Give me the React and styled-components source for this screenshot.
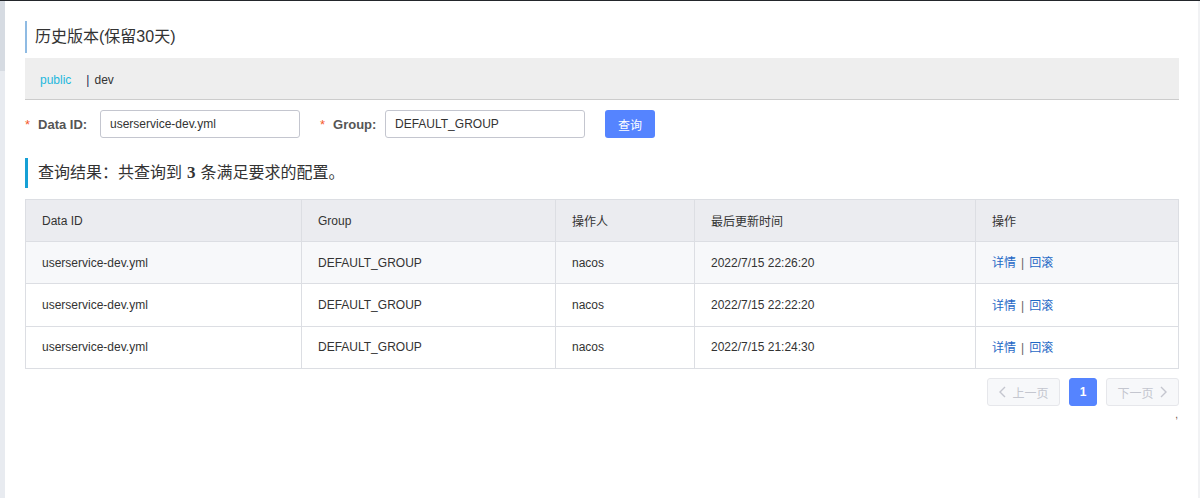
import React from "react";
import styled, { createGlobalStyle } from "styled-components";

const Global = createGlobalStyle`
  html, body { margin: 0; padding: 0; background: #fff; }
  body { font-family: "Liberation Sans", "Noto Sans CJK SC", sans-serif; color: #333; }
  * { box-sizing: border-box; }
`;

const Page = styled.div`
  width: 1200px;
  height: 498px;
  display: flex;
  flex-direction: column;
  border-top: 1px solid #23262b;
  overflow: hidden;
`;

const Body = styled.div`
  flex: 1;
  display: flex;
`;

const LeftRail = styled.div`
  width: 5px;
  display: flex;
  flex-direction: column;
  background: #e8ebf0;
`;

const RailThumb = styled.div`
  height: 70px;
  background: #d6dbe2;
`;

const RightRail = styled.div`
  width: 2px;
  background: #f1f2f4;
`;

const Main = styled.main`
  flex: 1;
  padding: 20px 19px 0 20px;
  display: flex;
  flex-direction: column;
`;

const PageTitle = styled.h1`
  margin: 0;
  height: 32px;
  line-height: 32px;
  border-left: 2px solid #8fbbe3;
  padding-left: 8px;
  font-size: 16px;
  font-weight: normal;
  color: #333;
`;

const NamespaceBar = styled.div`
  margin-top: 5px;
  height: 42px;
  background: #eee;
  border-bottom: 1px solid #ccc;
  display: flex;
  align-items: center;
  padding: 3px 0 0 15px;
  font-size: 12px;
`;

const Ns = styled.span`
  color: ${(p) => (p.$active ? "#1fb8dd" : "#333")};
  margin-right: ${(p) => (p.$active ? "15px" : "0")};
`;

const Sep = styled.span`
  color: #1a2750;
  margin-right: 5px;
`;

const FormRow = styled.div`
  margin-top: 10px;
  display: flex;
  align-items: center;
  height: 28px;
`;

const Label = styled.label`
  display: flex;
  align-items: center;
  font-size: 13px;
  font-weight: bold;
  color: #555;
  width: ${(p) => p.$w}px;
`;

const Star = styled.span`
  color: #f55a2c;
  margin-right: 8px;
  font-weight: normal;
`;

const Input = styled.input`
  width: 200px;
  height: 28px;
  border: 1px solid #c4c6cf;
  border-radius: 3px;
  padding: 0 9px;
  font-family: inherit;
  font-size: 12px;
  color: #333;
  margin-right: 20px;
  outline: none;
`;

const PrimaryButton = styled.button`
  width: 50px;
  height: 28px;
  border: none;
  border-radius: 3px;
  background: #5584ff;
  color: #fff;
  font-family: inherit;
  font-size: 12px;
  padding: 0;
`;

const ResultTitle = styled.h2`
  margin: 20px 0 0 0;
  height: 30px;
  line-height: 30px;
  border-left: 3px solid #16a0d5;
  padding-left: 10px;
  font-size: 16px;
  font-weight: normal;
  color: #333;
`;

const Count = styled.strong`
  font-family: "Liberation Serif", serif;
  font-size: 17px;
  margin: 0 5px;
`;

const Table = styled.table`
  margin-top: 11px;
  width: 100%;
  border-collapse: collapse;
  table-layout: fixed;
  font-size: 12px;
  border: 1px solid #dcdee3;
`;

const Th = styled.th`
  height: 42px;
  background: #ebecf0;
  font-weight: normal;
  text-align: left;
  padding: 0 16px;
  color: #333;
  border: 1px solid #dcdee3;
  width: ${(p) => p.$w}px;
`;

const Tr = styled.tr`
  background: ${(p) => (p.$hover ? "#f7f8fa" : "#fff")};
`;

const Td = styled.td`
  height: 42.4px;
  padding: 0 16px;
  border: 1px solid #dcdee3;
  color: #333;
`;

const Actions = styled.span`
  position: relative;
  top: -1px;
`;

const Link = styled.a`
  color: #1f68c5;
  text-decoration: none;
`;

const Bar = styled.span`
  color: #666;
  margin: 0 5px;
`;

const Pager = styled.div`
  margin-top: 9px;
  display: flex;
  justify-content: flex-end;
  gap: 9px;
`;

const PageBtn = styled.button`
  height: 28px;
  width: ${(p) => (p.$num ? 28 : 73)}px;
  border-radius: 3px;
  border: 1px solid ${(p) => (p.$num ? "#5584ff" : "#e6e7eb")};
  background: ${(p) => (p.$num ? "#5584ff" : "#f7f8fa")};
  color: ${(p) => (p.$num ? "#fff" : "#c4c6cf")};
  font-family: inherit;
  font-size: 12px;
  font-weight: ${(p) => (p.$num ? "bold" : "normal")};
  display: flex;
  align-items: center;
  justify-content: center;
  gap: 4px;
  padding: 0;
`;

const Tick = styled.div`
  align-self: flex-end;
  margin-top: 4px;
  margin-right: 1px;
  font-size: 10px;
  line-height: 10px;
  color: #6a4a3a;
`;

const Chevron = ({ dir }) => (
  <svg width="10" height="12" viewBox="0 0 10 12" fill="none">
    <path
      d={dir === "left" ? "M7 1 L2 6 L7 11" : "M3 1 L8 6 L3 11"}
      stroke="#c4c6cf"
      strokeWidth="1.4"
    />
  </svg>
);

const rows = [
  { id: "userservice-dev.yml", group: "DEFAULT_GROUP", user: "nacos", time: "2022/7/15 22:26:20" },
  { id: "userservice-dev.yml", group: "DEFAULT_GROUP", user: "nacos", time: "2022/7/15 22:22:20" },
  { id: "userservice-dev.yml", group: "DEFAULT_GROUP", user: "nacos", time: "2022/7/15 21:24:30" },
];

export default function App() {
  return (
    <>
      <Global />
      <Page>
        <Body>
          <LeftRail>
            <RailThumb />
          </LeftRail>
          <Main>
            <PageTitle>历史版本(保留30天)</PageTitle>
            <NamespaceBar>
              <Ns $active>public</Ns>
              <Sep>|</Sep>
              <Ns>dev</Ns>
            </NamespaceBar>
            <FormRow>
              <Label $w={75}>
                <Star>*</Star>Data ID:
              </Label>
              <Input defaultValue="userservice-dev.yml" />
              <Label $w={65}>
                <Star>*</Star>Group:
              </Label>
              <Input defaultValue="DEFAULT_GROUP" />
              <PrimaryButton>查询</PrimaryButton>
            </FormRow>
            <ResultTitle>
              查询结果：共查询到<Count>3</Count>条满足要求的配置。
            </ResultTitle>
            <Table>
              <thead>
                <tr>
                  <Th $w={276}>Data ID</Th>
                  <Th $w={254}>Group</Th>
                  <Th $w={139}>操作人</Th>
                  <Th $w={281}>最后更新时间</Th>
                  <Th $w={203}>操作</Th>
                </tr>
              </thead>
              <tbody>
                {rows.map((r, i) => (
                  <Tr key={i} $hover={i === 0}>
                    <Td>{r.id}</Td>
                    <Td>{r.group}</Td>
                    <Td>{r.user}</Td>
                    <Td>{r.time}</Td>
                    <Td>
                      <Actions>
                        <Link>详情</Link>
                        <Bar>|</Bar>
                        <Link>回滚</Link>
                      </Actions>
                    </Td>
                  </Tr>
                ))}
              </tbody>
            </Table>
            <Pager>
              <PageBtn>
                <Chevron dir="left" />
                上一页
              </PageBtn>
              <PageBtn $num>1</PageBtn>
              <PageBtn>
                下一页
                <Chevron dir="right" />
              </PageBtn>
            </Pager>
            <Tick>,</Tick>
          </Main>
          <RightRail />
        </Body>
      </Page>
    </>
  );
}
